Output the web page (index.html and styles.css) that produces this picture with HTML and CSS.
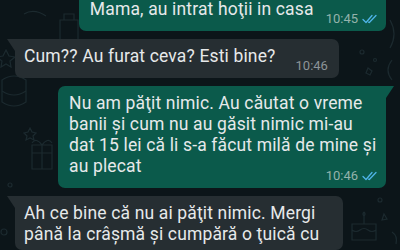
FILE: index.html
```html
<!DOCTYPE html>
<html lang="ro">
<head>
    <meta charset="UTF-8">
    <meta name="viewport" content="width=device-width, initial-scale=1.0">
    <title>Chat</title>
    <link rel="stylesheet" href="styles.css">
</head>
<body>
    <div class="chat">
        <svg class="wallpaper" width="400" height="250" viewBox="0 0 400 250" fill="none" stroke="#1c2a2f" stroke-width="1.2">
            <!-- left side doodles -->
            <path d="M6 50 l3 6 6 1 -5 4 1 6 -5 -3 -5 3 1 -6 -5 -4 6 -1z"/>
            <path d="M2 80 q12 -8 24 0 v22 q-12 8 -24 0z"/>
            <path d="M2 91 q12 8 24 0"/>
            <path d="M24 14 q10 -6 22 2"/>
            <path d="M32 145 h20 v24 h-20z M32 153 h20 M42 145 v24 M42 145 q-6 -8 -10 -2 M42 145 q6 -8 10 -2"/>
            <path d="M30 128 l2 4 4 1 -3 3 1 4 -4 -2 -4 2 1 -4 -3 -3 4 -1z"/>
            <circle cx="10" cy="185" r="2"/>
            <circle cx="4" cy="232" r="3"/>
            <path d="M60 20 h18 v22 h-18z M64 20 v-6 h10 v6"/>
            <!-- right side doodles -->
            <path d="M390 20 q8 14 0 28"/>
            <path d="M392 60 q-8 10 0 20"/>
            <circle cx="362" cy="52" r="2"/>
            <circle cx="375" cy="60" r="1.5"/>
            <path d="M368 68 l4 3 -2 4 -4 -2z"/>
            <path d="M352 224 h24 v16 h-24z M352 230 q4 3 8 0 q4 -3 8 0 q4 3 8 0 M364 224 v-8 M364 212 q-2 2 0 4 q2 -2 0 -4"/>
            <circle cx="380" cy="200" r="2"/>
            <path d="M384 214 l3 5 -5 1z"/>
            <path d="M392 232 q6 4 4 12"/>
            <circle cx="350" cy="150" r="1.5"/>
            <circle cx="370" cy="140" r="2"/>
        </svg>

        <div class="msg out first">
            <span class="text">Mama, au intrat hoţii in casa</span>
            <span class="meta">10:45 <svg class="ticks" width="16" height="10" viewBox="0 0 16 10"><path d="M1 5.5 l3 3 L10 1.5 M6.5 8.2 l0.8 0.3 L14 1.5"/></svg></span>
        </div>

        <div class="msg in tail">
            <span class="text">Cum?? Au furat ceva? Esti bine?</span>
            <span class="meta">10:46</span>
        </div>

        <div class="msg out tail">
            <span class="text">Nu am păţit nimic. Au căutat o vreme banii şi cum nu au găsit nimic mi-au dat 15 lei că li s-a făcut milă de mine şi au plecat</span>
            <span class="meta">10:46 <svg class="ticks" width="16" height="10" viewBox="0 0 16 10"><path d="M1 5.5 l3 3 L10 1.5 M6.5 8.2 l0.8 0.3 L14 1.5"/></svg></span>
        </div>

        <div class="msg in tail">
            <span class="text">Ah ce bine că nu ai păţit nimic. Mergi până la crâşmă şi cumpără o ţuică cu</span>
        </div>
    </div>
</body>
</html>
```

FILE: styles.css
```css
/* --- Dark chat theme --- */
:root {
    --bg-chat: #0c1519;
    --bubble-out: #0b5a4b;
    --bubble-in: #262e32;
    --text-main: #e6e9ea;
    --meta-out: #93b3ab;
    --meta-in: #8c9498;
    --tick-blue: #4fb4e8;
}
*, *::before, *::after { box-sizing: border-box; margin: 0; padding: 0; }
html, body { width: 400px; height: 250px; overflow: hidden; }
body {
    font-family: Roboto, "Noto Sans", sans-serif;
    background: var(--bg-chat);
    color: var(--text-main);
}
.chat { position: relative; display: flex; flex-direction: column; gap: 8px; padding: 0 14px 0 15px; }
.wallpaper { position: absolute; top: 0; left: 0; z-index: 0; }

.msg { position: relative; z-index: 1; display: flow-root; max-width: 328px; padding: 7px 11px 5px 9px; border-radius: 7px; font-size: 17.5px; line-height: 21px; letter-spacing: 0.15px; }
.msg.first { margin-top: -8px; }
.out { align-self: flex-end; background: var(--bubble-out); padding-left: 11px; padding-right: 8px; }
.in { align-self: flex-start; background: var(--bubble-in); }

.in.tail { border-top-left-radius: 0; }
.in.tail::before { content: ""; position: absolute; top: 0; left: -8px; border-top: 12px solid var(--bubble-in); border-left: 8px solid transparent; }
.out.tail { border-top-right-radius: 0; }
.out.tail::after { content: ""; position: absolute; top: 0; right: -8px; border-top: 12px solid var(--bubble-out); border-right: 8px solid transparent; }

.meta { float: right; margin: 12px 0 0 12px; font-size: 13px; line-height: 15px; letter-spacing: 0; display: flex; align-items: center; gap: 4px; }
.out .meta { color: var(--meta-out); }
.in .meta { color: var(--meta-in); margin-left: 20px; }
.ticks { fill: none; stroke: var(--tick-blue); stroke-width: 1.3; stroke-linecap: round; stroke-linejoin: round; }
```
